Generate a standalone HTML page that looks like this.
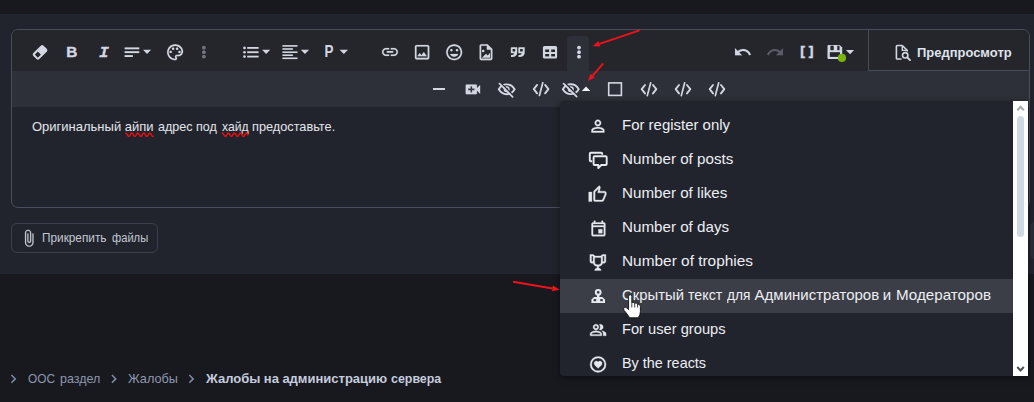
<!DOCTYPE html>
<html lang="ru">
<head>
<meta charset="utf-8">
<title>Editor</title>
<style>
*{box-sizing:border-box;margin:0;padding:0}
html,body{width:1034px;height:402px;overflow:hidden;background:#18191f}
body{position:relative;font-family:"Liberation Sans","DejaVu Sans",sans-serif;color:#dfe2ea}
.abs{position:absolute}
#main{left:0;top:14px;width:1034px;height:260px;background:#22242d}
#editor{left:11px;top:29px;width:1019px;height:179px;border:1px solid #494e5d;border-radius:7px;background:#22242d;overflow:hidden}
#row1{left:0;top:0;width:1017px;height:41px;background:#25262c}
#row2{left:0;top:41px;width:1017px;height:36px;background:#2e3039}
#morebtn{left:555px;top:6px;width:22px;height:36px;background:#2e3039;border-radius:4px 4px 0 0}
#divider{left:856px;top:0;width:1px;height:41px;background:#474c5b}
#row1line{left:856px;top:40px;width:161px;height:1px;background:#474c5b}
.t{position:absolute;white-space:nowrap;line-height:1;transform-origin:0 50%}
#edtext{left:32px;top:120px;font-size:13px;color:#e3e5eb;width:320px;height:13px}
#edtext span,.w span{position:absolute;top:0;transform-origin:0 50%}
.w{width:10px;height:15px}
#attach{left:11px;top:223px;width:147px;height:30px;border:1px solid #3d404c;border-radius:6px}
#attachtxt{left:42px;top:232px;font-size:12px;color:#c3c7d2}
#preview{left:917px;top:45.6px;font-size:13px;font-weight:bold;color:#dfe2ea;transform:scaleX(.997)}
#menu{left:560px;top:101px;width:453px;height:275px;background:#22242d;border-radius:4px 0 0 4px;overflow:hidden}
#menushadow{left:560px;top:101px;width:468px;height:275px;border-radius:4px 0 0 4px;box-shadow:0 2px 6px rgba(0,0,0,.5)}
#hl{left:0;top:178px;width:453px;height:34px;background:#3c3e47}
.mi{position:absolute;left:62px;font-size:15px;color:#eceef3;white-space:nowrap;line-height:1;transform-origin:0 50%}
#sidebtn{left:1030px;top:222px;width:10px;height:37px;background:#2a2d37;border-radius:5px 0 0 5px}
#sb{left:1013px;top:101px;width:15px;height:275px;background:#fff}
#thumb{left:1017px;top:116px;width:7px;height:121px;background:#cfd9e3;border-radius:3.500px}
.bc{position:absolute;top:372px;font-size:13px;color:#8d97ad;white-space:nowrap;line-height:1;transform-origin:0 50%}
#icons{position:absolute;left:0;top:0;width:1034px;height:402px;pointer-events:none}
</style>
</head>
<body>
<div class="abs" id="main"></div>

<div class="abs" id="editor">
  <div class="abs" id="row1"></div>
  <div class="abs" id="row2"></div>
  <div class="abs" id="morebtn"></div>
  <div class="abs" id="divider"></div>
  <div class="abs" id="row1line"></div>
</div>

<div class="t" id="edtext"><span style="left:0.0px;transform:scaleX(1.0)">Оригинальный</span> <span style="left:92.7px;transform:scaleX(1.0)">айпи</span> <span style="left:125.6px;transform:scaleX(0.965)">адрес</span> <span style="left:164.2px;transform:scaleX(0.965)">под</span> <span style="left:189.5px;transform:scaleX(0.935)">хайд</span> <span style="left:220.0px;transform:scaleX(0.98)">предоставьте.</span></div>

<div class="abs" id="attach"></div>
<div class="t w" id="attachtxt"><span style="left:-0.5px;transform:scaleX(0.983)">Прикрепить</span> <span style="left:69.6px;transform:scaleX(0.93)">файлы</span></div>
<div class="t" id="preview">Предпросмотр</div>

<div class="abs" id="sidebtn"></div>
<div class="abs" id="menushadow"></div>
<div class="abs" id="menu">
  <div class="abs" id="hl"></div>
  <div class="mi" style="top:16px;transform:scaleX(.997)">For register only</div>
  <div class="mi" style="top:50px;transform:scaleX(1.011)">Number of posts</div>
  <div class="mi" style="top:84px;transform:scaleX(1.011)">Number of likes</div>
  <div class="mi" style="top:118px;transform:scaleX(1.011)">Number of days</div>
  <div class="mi" style="top:152px;transform:scaleX(1.027)">Number of trophies</div>
  <div class="mi w" style="top:186px"><span style="left:0.0px;transform:scaleX(0.99)">Скрытый</span> <span style="left:65.8px;transform:scaleX(0.95)">текст</span> <span style="left:104.6px;transform:scaleX(0.91)">для</span> <span style="left:132.6px;transform:scaleX(1.0)">Администраторов</span> <span style="left:260.8px;transform:scaleX(1.0)">и</span> <span style="left:273.6px;transform:scaleX(1.012)">Модераторов</span></div>
  <div class="mi" style="top:220px;transform:scaleX(.978)">For user groups</div>
  <div class="mi" style="top:254px;transform:scaleX(.96)">By the reacts</div>
</div>
<div class="abs" id="sb"></div>
<div class="abs" id="thumb"></div>

<div class="bc w" style="left:28px"><span style="left:-0.4px;transform:scaleX(0.91)">ООС</span> <span style="left:31.6px;transform:scaleX(0.96)">раздел</span></div>
<div class="bc w" style="left:128px"><span style="left:-0.4px;transform:scaleX(0.975)">Жалобы</span></div>
<div class="bc w" style="left:206px;font-weight:bold;color:#c5ccde"><span style="left:0.0px;transform:scaleX(1.0)">Жалобы</span> <span style="left:57.8px;transform:scaleX(1.0)">на</span> <span style="left:76.4px;transform:scaleX(1.0)">администрацию</span> <span style="left:185.3px;transform:scaleX(0.955)">сервера</span></div>

<svg id="icons" viewBox="0 0 1034 402" width="1034" height="402">
<g transform="translate(40.05,52.4) rotate(-45)"><rect x="-7.25" y="-4.25" width="14.5" height="8.5" rx="2" fill="#d3d7e1"/><rect x="-5.3" y="-2.2" width="4.400" height="4.400" rx="0.3" fill="#25262c"/></g>
<text transform="translate(66.3,56.800) scale(1.02,1)" font-family="Liberation Sans, sans-serif" font-weight="bold" font-size="15" fill="#d3d7e1" stroke="#d3d7e1" stroke-width="0.400">B</text>
<text transform="translate(98.9,56.700) scale(1.06,1)" font-family="Liberation Mono, monospace" font-weight="bold" font-style="italic" font-size="15.5" fill="#d3d7e1" stroke="#d3d7e1" stroke-width="0.300">I</text>
<g fill="#d3d7e1"><rect x="124.6" y="47.4" width="14.7" height="1.9"/><rect x="124.6" y="51.2" width="14.7" height="1.9"/><rect x="124.6" y="55.1" width="8.3" height="1.9"/></g>
<path d="M143 49.8H151.1L147.05 54Z" fill="#d3d7e1"/>
<g transform="translate(165.5,42.7) scale(0.8)" fill="#d3d7e1" stroke="#d3d7e1" stroke-width="0.2" stroke-linejoin="round"><path d="M12 22C6.49 22 2 17.51 2 12S6.49 2 12 2s10 4.04 10 9c0 3.31-2.69 6-6 6h-1.77c-.28 0-.5.22-.5.5 0 .12.05.23.13.33.41.47.64 1.06.64 1.67A2.5 2.5 0 0 1 12 22zm0-18c-4.41 0-8 3.59-8 8s3.59 8 8 8c.28 0 .5-.22.5-.5a.54.54 0 0 0-.14-.35c-.41-.46-.63-1.05-.63-1.65a2.5 2.5 0 0 1 2.5-2.500H16c2.21 0 4-1.79 4-4 0-3.86-3.59-7-8-7z"/><circle cx="6.5" cy="11.5" r="1.5"/><circle cx="9.5" cy="7.5" r="1.5"/><circle cx="14.5" cy="7.5" r="1.5"/><circle cx="17.5" cy="11.5" r="1.5"/></g>
<g fill="#72757f"><circle cx="203.9" cy="47.7" r="1.9"/><circle cx="203.9" cy="52.2" r="1.9"/><circle cx="203.9" cy="56.6" r="1.9"/></g>
<g fill="#d3d7e1"><circle cx="244.5" cy="47.9" r="1.3"/><rect x="247.2" y="47.0" width="11.4" height="1.8"/><circle cx="244.5" cy="52.2" r="1.3"/><rect x="247.2" y="51.300000000000004" width="11.4" height="1.8"/><circle cx="244.5" cy="56.6" r="1.3"/><rect x="247.2" y="55.7" width="11.4" height="1.8"/></g>
<path d="M262.1 49.8H270.2L266.15 54.1Z" fill="#d3d7e1"/>
<g fill="#d3d7e1"><rect x="282.4" y="45.1" width="15.1" height="1.6"/><rect x="282.4" y="48.2" width="10.5" height="1.6"/><rect x="282.4" y="51.400000000000006" width="15.1" height="1.6"/><rect x="282.4" y="54.400000000000006" width="10.5" height="1.6"/><rect x="282.4" y="57.5" width="15.1" height="1.6"/></g>
<path d="M300.8 49.8H309.1L304.95000000000005 54.1Z" fill="#d3d7e1"/>
<text transform="translate(324.6,56.900) scale(0.84,1)" font-family="Liberation Sans, sans-serif" font-weight="bold" font-size="16" fill="#d3d7e1">P</text>
<path d="M339.6 49.8H348L343.8 54.1Z" fill="#d3d7e1"/>
<g transform="translate(380.4,42.3) scale(0.8)" fill="#d3d7e1" stroke="#d3d7e1" stroke-width="0.2" stroke-linejoin="round"><path d="M3.9 12c0-1.71 1.39-3.1 3.1-3.1h4V7H7c-2.76 0-5 2.24-5 5s2.24 5 5 5h4v-1.9H7c-1.71 0-3.1-1.39-3.1-3.1zM8 13h8v-2H8v2zm9-6h-4v1.9h4c1.71 0 3.1 1.39 3.1 3.1s-1.39 3.1-3.1 3.1h-4V17h4c2.76 0 5-2.24 5-5s-2.24-5-5-5z"/></g>
<g transform="translate(412.5,42.6) scale(0.8)" fill="#d3d7e1" stroke="#d3d7e1" stroke-width="0.2" stroke-linejoin="round"><path d="M19 5v14H5V5h14m0-2H5c-1.1 0-2 .9-2 2v14c0 1.1.9 2 2 2h14c1.1 0 2-.9 2-2V5c0-1.1-.9-2-2-2zm-4.86 8.86l-3 3.87L9 13.14 6 17h12l-3.86-5.14z"/></g>
<g transform="translate(444.6,42.7) scale(0.8)" fill="#d3d7e1" stroke="#d3d7e1" stroke-width="0.2" stroke-linejoin="round"><path d="M11.99 2C6.47 2 2 6.48 2 12s4.47 10 9.99 10C17.52 22 22 17.52 22 12S17.52 2 11.99 2zM12 20c-4.42 0-8-3.58-8-8s3.58-8 8-8 8 3.58 8 8-3.58 8-8 8zm3.5-9c.83 0 1.5-.67 1.5-1.5S16.33 8 15.5 8 14 8.67 14 9.5s.67 1.5 1.5 1.5zm-7 0c.83 0 1.5-.67 1.5-1.5S9.33 8 8.5 8 7 8.67 7 9.5 7.67 11 8.5 11zm3.5 6.5c2.33 0 4.31-1.46 5.11-3.5H6.89c.8 2.04 2.78 3.5 5.11 3.5z"/></g>
<g transform="translate(476.4,42.6) scale(0.8)" fill="#d3d7e1" stroke="#d3d7e1" stroke-width="0.2" stroke-linejoin="round"><path d="M14,2L20,8V20A2,2 0 0,1 18,22H6A2,2 0 0,1 4,20V4A2,2 0 0,1 6,2H14M18,20V9H13V4H6V20H18M17,13V19H7L12,14L14,16M10,10.5A1.5,1.5 0 0,1 8.5,12A1.5,1.5 0 0,1 7,10.5A1.5,1.5 0 0,1 8.5,9A1.5,1.5 0 0,1 10,10.5Z"/></g>
<g fill="#d3d7e1" fill-rule="evenodd"><path transform="translate(510.5,47.200)" d="M1 0H6.7V5.4Q6.7 9.800 1.400 9.800H0.500V7.700H1.400Q3.700 7.700 3.700 6.100H0.300V0.700Q0.300 0 1 0ZM2.100 1.800V4.400H4.700V1.800Z"/><path transform="translate(518,47.200)" d="M1 0H6.7V5.4Q6.7 9.800 1.400 9.800H0.500V7.700H1.400Q3.700 7.700 3.700 6.100H0.300V0.700Q0.300 0 1 0ZM2.100 1.800V4.400H4.700V1.800Z"/></g>
<g><rect x="542.9" y="46" width="14.200" height="12.500" rx="1.600" fill="#d3d7e1"/><g fill="#25262c"><rect x="545.2" y="49.500" width="3.900" height="2.500"/><rect x="551.2" y="49.500" width="3.800" height="2.500"/><rect x="545.2" y="54" width="3.900" height="2.400"/><rect x="551.2" y="54" width="3.800" height="2.400"/></g></g>
<g fill="#d3d7e1"><circle cx="579" cy="47.6" r="1.9"/><circle cx="579" cy="52.2" r="1.9"/><circle cx="579" cy="56.7" r="1.9"/></g>
<g transform="translate(733.5,42.9) scale(0.775)" fill="#d3d7e1" stroke="#d3d7e1" stroke-width="0.2" stroke-linejoin="round"><path d="M12.5 8c-2.65 0-5.05.99-6.9 2.6L2 7v9h9l-3.62-3.62c1.39-1.16 3.16-1.88 5.12-1.88 3.54 0 6.55 2.31 7.6 5.5l2.37-.78C21.08 11.03 17.15 8 12.5 8z"/></g>
<g transform="translate(765.9,42.9) scale(0.775)" fill="#5a5d68" stroke="#5a5d68" stroke-width="0.2" stroke-linejoin="round"><path d="M18.4 10.6C16.55 8.99 14.15 8 11.5 8c-4.65 0-8.58 3.03-9.96 7.22L3.9 16c1.05-3.19 4.05-5.5 7.6-5.5 1.95 0 3.73.72 5.12 1.88L13 16h9V7l-3.6 3.6z"/></g>
<text transform="translate(800.2,55.200) scale(1.13,1)" font-family="Liberation Sans, sans-serif" font-weight="bold" font-size="12.5" fill="#d3d7e1" stroke="#d3d7e1" stroke-width="0.450">[ ]</text>
<g><path d="M828.5 45H839.700L842.200 47.500V57.900Q842.200 58.900 841.200 58.900H828.500Q827.500 58.900 827.500 57.900V46Q827.500 45 828.500 45Z" fill="#d3d7e1"/><g fill="#25262c"><rect x="830.4" y="45.700" width="3.300" height="4.500"/><rect x="837.3" y="45.700" width="2.200" height="4.500"/><rect x="829.8" y="52.200" width="10.200" height="4.700"/></g><circle cx="841.9" cy="57.900" r="4.100" fill="#79b50a"/></g>
<path d="M846 50H854.1L850.05 54.2Z" fill="#d3d7e1"/>
<g fill="none" stroke="#d3d7e1" stroke-width="1.6" stroke-linejoin="round"><path d="M902.3 45.5H897.2Q896.4 45.500 896.4 46.300V58.200Q896.4 59 897.200 59H901.5"/><path d="M902.3 45.500L907.2 50.400V51.500"/><path d="M902.3 45.500V50.400H907.2" stroke-width="1.400"/><circle cx="905.2" cy="55.300" r="2.700"/><path d="M907.3 57.400L910 60.100" stroke-linecap="round" stroke-width="1.900"/></g>
<rect x="433" y="88" width="12" height="2" fill="#d3d7e1"/>
<g transform="translate(463.3,79.8) scale(0.8)" fill="#d3d7e1" stroke="#d3d7e1" stroke-width="0.2" stroke-linejoin="round"><path d="M17 10.5V7c0-.55-.45-1-1-1H4c-.55 0-1 .45-1 1v10c0 .55.45 1 1 1h12c.55 0 1-.45 1-1v-3.5l4 4v-11l-4 4zM14 13h-3v3H9v-3H6v-2h3V8h2v3h3v2z"/></g>
<g transform="translate(506.7,89.9)" fill="none" stroke="#d3d7e1" stroke-width="1.9" stroke-linecap="round"><path d="M-7.9 -0.6C-6 -3.9 -3.3 -5.5 0 -5.5C3.3 -5.5 6 -3.9 7.900 -0.6C6 2.700 3.300 4.300 0 4.300C-3.300 4.300 -6 2.700 -7.900 -0.6Z"/><circle cx="0" cy="-0.6" r="2.300" stroke-width="1.500"/><path d="M-6.2 -7.200L7.400 6.400" stroke="#2e3039" stroke-width="1.500" stroke-linecap="butt"/><path d="M-7.2 -6.200L5.900 6.900" stroke-width="1.700"/></g>
<g transform="translate(541.1,89.1)" fill="none" stroke="#d3d7e1" stroke-width="1.9" stroke-linecap="round" stroke-linejoin="round"><path d="M-4.0 -4.2L-7.3 0L-4.0 4.2"/><path d="M4.0 -4.2L7.3 0L4.0 4.2"/><path d="M1.7 -6.4L-1.7 6.4" stroke-width="1.7"/></g>
<g transform="translate(570.8,89.8)" fill="none" stroke="#d3d7e1" stroke-width="1.9" stroke-linecap="round"><path d="M-7.9 -0.6C-6 -3.9 -3.3 -5.5 0 -5.5C3.3 -5.5 6 -3.9 7.900 -0.6C6 2.700 3.300 4.300 0 4.300C-3.300 4.300 -6 2.700 -7.900 -0.6Z"/><circle cx="0" cy="-0.6" r="2.300" stroke-width="1.500"/><path d="M-6.2 -7.200L7.400 6.400" stroke="#2e3039" stroke-width="1.500" stroke-linecap="butt"/><path d="M-7.2 -6.200L5.900 6.900" stroke-width="1.700"/></g>
<path d="M581.8 91.100H590.3L586.05 86.600Z" fill="#f2f3f6"/>
<rect x="608.7" y="82.900" width="12.700" height="12.500" fill="none" stroke="#d3d7e1" stroke-width="1.600"/>
<g transform="translate(649,89.2)" fill="none" stroke="#d3d7e1" stroke-width="1.9" stroke-linecap="round" stroke-linejoin="round"><path d="M-4.0 -4.2L-7.3 0L-4.0 4.2"/><path d="M4.0 -4.2L7.3 0L4.0 4.2"/><path d="M1.7 -6.4L-1.7 6.4" stroke-width="1.7"/></g>
<g transform="translate(683,89.2)" fill="none" stroke="#d3d7e1" stroke-width="1.9" stroke-linecap="round" stroke-linejoin="round"><path d="M-4.0 -4.2L-7.3 0L-4.0 4.2"/><path d="M4.0 -4.2L7.3 0L4.0 4.2"/><path d="M1.7 -6.4L-1.7 6.4" stroke-width="1.7"/></g>
<g transform="translate(717,89.2)" fill="none" stroke="#d3d7e1" stroke-width="1.9" stroke-linecap="round" stroke-linejoin="round"><path d="M-4.0 -4.2L-7.3 0L-4.0 4.2"/><path d="M4.0 -4.2L7.3 0L4.0 4.2"/><path d="M1.7 -6.4L-1.7 6.4" stroke-width="1.7"/></g>
<g transform="translate(19.5,228.9) scale(0.78)" fill="#c3c7d2" stroke="#c3c7d2" stroke-width="0.2" stroke-linejoin="round"><path d="M16.500 6v11.500c0 2.210-1.790 4-4 4s-4-1.790-4-4V5a2.500 2.500 0 0 1 5 0v10.500c0 .550-.450 1-1 1s-1-.450-1-1V6H10v9.500a2.500 2.500 0 0 0 5 0V5c0-2.210-1.790-4-4-4S7 2.790 7 5v12.500c0 3.040 2.460 5.500 5.500 5.500s5.500-2.460 5.500-5.500V6h-1.500z"/></g>
<path d="M11.4 375L15.3 378.900L11.4 382.800" fill="none" stroke="#7f8ba6" stroke-width="1.500"/>
<path d="M111.9 375L115.80000000000001 378.900L111.9 382.800" fill="none" stroke="#7f8ba6" stroke-width="1.500"/>
<path d="M189.3 375L193.20000000000002 378.900L189.3 382.800" fill="none" stroke="#7f8ba6" stroke-width="1.500"/>
<g transform="translate(588.3,116.5) scale(0.8)" fill="#e6e9ef" stroke="#e6e9ef" stroke-width="0.4" stroke-linejoin="round"><path d="M12 5.9c1.16 0 2.1.94 2.1 2.1s-.94 2.1-2.1 2.1S9.9 9.16 9.9 8s.94-2.1 2.1-2.1m0 9c2.97 0 6.1 1.46 6.1 2.1v1.1H5.900V17c0-.64 3.13-2.1 6.1-2.1M12 4C9.79 4 8 5.790 8 8s1.790 4 4 4 4-1.790 4-4-1.790-4-4-4zm0 9c-2.670 0-8 1.340-8 4v3h16v-3c0-2.660-5.330-4-8-4z"/></g>
<g fill="none" stroke="#e6e9ef" stroke-width="1.900" stroke-linejoin="round"><path d="M592.2 161.300H590.800Q589.800 161.300 589.800 160.300V153.700Q589.800 152.700 590.800 152.700H601.2Q602.2 152.700 602.2 153.700V154.800"/><path d="M594.6 156.200H605.7Q606.7 156.200 606.7 157.200V164Q606.7 165 605.700 165H601.300L598.300 168V165H594.600Q593.600 165 593.600 164V157.200Q593.600 156.200 594.600 156.200Z"/></g>
<g transform="translate(587.9,184.8) scale(0.8)" fill="#e6e9ef" stroke="#e6e9ef" stroke-width="0.4" stroke-linejoin="round"><path d="M5,9V21H1V9H5M9,21A2,2 0 0,1 7,19V9C7,8.450 7.220,7.950 7.590,7.590L14.170,1L15.230,2.060C15.500,2.330 15.670,2.700 15.670,3.110L15.640,3.430L14.690,8H21C22.110,8 23,8.900 23,10V12C23,12.260 22.950,12.500 22.860,12.730L19.840,19.780C19.540,20.500 18.830,21 18,21H9M9,19H18.030L21,12V10H12.210L13.340,4.680L9,9.030V19Z"/></g>
<g transform="translate(589.2,219.3) scale(0.77)" fill="#e6e9ef" stroke="#e6e9ef" stroke-width="0.4" stroke-linejoin="round"><path d="M19 4h-1V2h-2v2H8V2H6v2H5c-1.110 0-1.990.900-1.990 2L3 20c0 1.100.890 2 2 2h14c1.100 0 2-.900 2-2V6c0-1.100-.900-2-2-2zm0 16H5V10h14v10zm0-12H5V6h14v2zm-7 5h5v5h-5z"/></g>
<g transform="translate(588.3,252.8) scale(0.8)" fill="#e6e9ef" stroke="#e6e9ef" stroke-width="0.4" stroke-linejoin="round"><path d="M18 2C17.100 2 16 3 16 4H8C8 3 6.900 2 6 2H2V11C2 12 3 13 4 13H6.200C6.600 15 7.900 16.700 11 17V19.080C8 19.540 8 22 8 22H16C16 22 16 19.540 13 19.080V17C16.100 16.700 17.400 15 17.800 13H20C21 13 22 12 22 11V2H18M6 11H4V4H6V11M16 11.500C16 13.430 15.420 15 12 15C8.590 15 8 13.430 8 11.500V6H16V11.500M20 11H18V4H20V11Z"/></g>
<g fill="#e6e9ef"><circle cx="598.2" cy="292.300" r="2.400" fill="none" stroke="#e6e9ef" stroke-width="2"/><rect x="597" y="294.800" width="2.400" height="3"/><path d="M591.4 302.900V299.500L594.100 297H602.300L605 299.500V302.900Z"/><rect x="593.6" y="299.100" width="2.600" height="2.100" fill="#3b3d46"/><rect x="600.200" y="299.100" width="2.600" height="2.100" fill="#3b3d46"/></g>
<g transform="translate(589.4,321.3) scale(0.727)" fill="#e6e9ef" stroke="#e6e9ef" stroke-width="0.4" stroke-linejoin="round"><path d="M16.670 13.130C18.040 14.060 19 15.320 19 17v3h4v-3c0-2.180-3.570-3.470-6.330-3.870zM15 12c2.210 0 4-1.790 4-4s-1.790-4-4-4c-.470 0-.910.100-1.330.240C14.500 5.270 15 6.580 15 8s-.500 2.730-1.330 3.760c.420.140.860.240 1.330.240zM9 12c2.210 0 4-1.790 4-4s-1.790-4-4-4-4 1.790-4 4 1.790 4 4 4zm0-6c1.100 0 2 .900 2 2s-.900 2-2 2-2-.900-2-2 .900-2 2-2zm0 7c-2.670 0-8 1.340-8 4v3h16v-3c0-2.660-5.330-4-8-4zm6 5H3v-.990C3.200 16.290 6.300 15 9 15s5.800 1.290 6 2v1z"/></g>
<g transform="translate(588.5,354.8) scale(0.8)" fill="#e6e9ef" stroke="#e6e9ef" stroke-width="0.4" stroke-linejoin="round"><path d="M12,2A10,10 0 0,0 2,12A10,10 0 0,0 12,22A10,10 0 0,0 22,12A10,10 0 0,0 12,2M12,20A8,8 0 0,1 4,12A8,8 0 0,1 12,4A8,8 0 0,1 20,12A8,8 0 0,1 12,20M9.750,7.820C8.210,7.820 7,9.030 7,10.570C7,12.460 8.700,14 11.280,16.340L12,17L12.720,16.340C15.300,14 17,12.460 17,10.570C17,9.030 15.790,7.820 14.250,7.820C13.380,7.820 12.550,8.230 12,8.870C11.450,8.230 10.620,7.820 9.750,7.820Z"/></g>
<path d="M1017.3 110.300L1020.55 106.800L1023.8 110.300" fill="none" stroke="#a9a9a9" stroke-width="2"/>
<path d="M1017.3 367L1020.55 370.500L1023.800 367" fill="none" stroke="#4f4f4f" stroke-width="2"/>
<path d="M125.2 133.37L125.7 133.06L126.2 133.19L126.7 133.73L127.2 134.53L127.7 135.37L128.2 136.03L128.7 136.34L129.2 136.21L129.7 135.67L130.2 134.87L130.7 134.03L131.2 133.37L131.7 133.06L132.2 133.19L132.7 133.73L133.2 134.53L133.7 135.37L134.2 136.03L134.7 136.34L135.2 136.21L135.7 135.67L136.2 134.87L136.7 134.03L137.2 133.37L137.7 133.06L138.2 133.19L138.7 133.73L139.2 134.53L139.7 135.37L140.2 136.03L140.7 136.34L141.2 136.21L141.7 135.67L142.2 134.87L142.7 134.03L143.2 133.37L143.7 133.06L144.2 133.19L144.7 133.73L145.2 134.53L145.7 135.37L146.2 136.03L146.7 136.34L147.2 136.21L147.7 135.67L148.2 134.87L148.7 134.03L149.2 133.37L149.7 133.06L150.2 133.19L150.7 133.73L151.2 134.53L151.7 135.37L152.2 136.03L152.7 136.34L153.2 136.21L153.7 135.67" fill="none" stroke="#ee1111" stroke-width="1.400" stroke-linejoin="round"/>
<path d="M221.8 133.37L222.3 133.06L222.8 133.19L223.3 133.73L223.8 134.53L224.3 135.37L224.8 136.03L225.3 136.34L225.8 136.21L226.3 135.67L226.8 134.87L227.3 134.03L227.8 133.37L228.3 133.06L228.8 133.19L229.3 133.73L229.8 134.53L230.3 135.37L230.8 136.03L231.3 136.34L231.8 136.21L232.3 135.67L232.8 134.87L233.3 134.03L233.8 133.37L234.3 133.06L234.8 133.19L235.3 133.73L235.8 134.53L236.3 135.37L236.8 136.03L237.3 136.34L237.8 136.21L238.3 135.67L238.8 134.87L239.3 134.03L239.8 133.37L240.3 133.06L240.8 133.19L241.3 133.73L241.8 134.53L242.3 135.37L242.8 136.03L243.3 136.34L243.8 136.21L244.3 135.67L244.8 134.87L245.3 134.03L245.8 133.37L246.3 133.06L246.8 133.19L247.3 133.73L247.8 134.53L248.3 135.37" fill="none" stroke="#ee1111" stroke-width="1.400" stroke-linejoin="round"/>
<path d="M639.5 30.3L599.4 43.9" stroke="#f0121a" stroke-width="1.9" fill="none"/><path d="M592.6 46.2L598.5 41.1L600.3 46.6Z" fill="#f0121a"/>
<path d="M603.3 63.3L592.7 75.6" stroke="#f0121a" stroke-width="1.9" fill="none"/><path d="M588.0 81.0L590.5 73.7L594.9 77.4Z" fill="#f0121a"/>
<path d="M513.1 281.7L552.5 288.5" stroke="#f0121a" stroke-width="1.9" fill="none"/><path d="M559.6 289.7L552.0 291.3L553.0 285.6Z" fill="#f0121a"/>
<path d="M628.6 296.300Q628.600 294.700 630.200 294.700Q631.800 294.700 631.800 296.300V302.600Q633.200 301.800 634.700 303.100Q636.300 302.500 637.600 304Q640.300 304 640.400 306.500V311.500Q640.400 315 638.200 317.800H629.600Q627.800 314.500 624.200 310.500Q622.800 308.600 624.300 307.600Q625.800 306.800 627.200 308.300L628.600 309.700Z" fill="#fff" stroke="#111" stroke-width="0.900" stroke-linejoin="round"/>
<path d="M631.8 302.600V307.500M634.700 303.100V307.500M637.600 304V307.500" stroke="#111" stroke-width="0.800" fill="none"/>
</svg>
</body>
</html>
